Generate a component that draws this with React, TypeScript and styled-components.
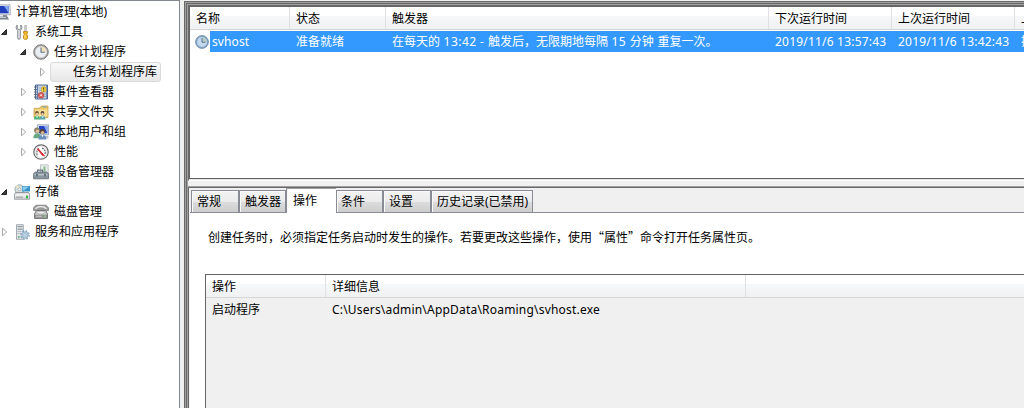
import React from "react";
import styled, { createGlobalStyle, css } from "styled-components";

const Global = createGlobalStyle`
  * { box-sizing: border-box; }
  html, body { margin: 0; padding: 0; overflow: hidden; }
  body {
    background: #f0f0f0;
    color: #000;
    font: 12px/16px "Noto Sans", "Noto Sans CJK SC", sans-serif;
  }
`;

const Window = styled.div`
  display: flex;
  width: 1024px;
  height: 408px;
  overflow: hidden;
  white-space: nowrap;
`;

const TreePanel = styled.nav`
  width: 180px;
  flex: none;
  background: #fff;
  border-top: 1px solid #828790;
  border-right: 1px solid #828790;
  padding-top: 1px;
`;

const TreeRow = styled.div<{ $level: number }>`
  display: flex;
  align-items: center;
  height: 20px;
  padding-left: ${(p) => [0, 0, 19, 38][p.$level]}px;
`;

const ArrowSlot = styled.span`
  display: flex;
  width: 14px;
  flex: none;
`;

const IconSlot = styled.span<{ $clipped?: boolean }>`
  display: flex;
  flex: none;
  justify-content: flex-end;
  overflow: hidden;
  width: ${(p) => (p.$clipped ? 11 : 16)}px;
`;

const TreeLabel = styled.span<{ $gap: number }>`
  padding-left: ${(p) => p.$gap}px;
`;

const SelectedLabel = styled.span`
  width: 111px;
  height: 20px;
  margin-left: -2px;
  padding: 1px 0 0 22px;
  border: 1px solid #d9d9d9;
  border-radius: 3px;
  background: linear-gradient(#f9f9f9, #e7e7e7);
`;

const Main = styled.main`
  flex: 1;
  min-width: 0;
  margin: 1px 0 0 4px;
  border: solid #696969;
  border-width: 1px 0 0 1px;
`;

const FrameOuter = styled.div`
  height: 100%;
  border: solid #a0a0a0;
  border-width: 1px 0 0 1px;
`;

const FrameMiddle = styled.div`
  height: 100%;
  border: solid #696969;
  border-width: 1px 0 0 1px;
`;

const FrameInner = styled.div`
  display: flex;
  flex-direction: column;
  height: 100%;
  border: solid #a0a0a0;
  border-width: 1px 0 0 1px;
`;

const TaskPane = styled.section`
  height: 176px;
  flex: none;
  background: #e3e3e3;
  border: solid #696969;
  border-width: 1px 0 1px 1px;
  border-bottom-color: #fff;
`;

const TaskList = styled.div`
  height: 173px;
  background: #fff;
  border: solid #646464;
  border-width: 1px 0 1px 1px;
`;

const HeaderRow = styled.div`
  display: flex;
  height: 23px;
  border-bottom: 1px solid #d5d5d5;
  background: linear-gradient(#fff 0 9px, #f7f8fa 9px, #f0f1f3 22px);
`;

const Column = styled.div<{ $w: number }>`
  width: ${(p) => p.$w}px;
  flex: none;
  padding: 4px 0 0 6px;
  border-right: 1px solid #e0e1e3;
`;

const TaskRow = styled.div`
  display: flex;
  height: 21px;
  margin-top: 1px;
`;

const RowIcon = styled.span`
  display: flex;
  align-items: center;
  width: 20px;
  padding-left: 5px;
  flex: none;
`;

const RowBand = styled.div`
  display: flex;
  flex: 1;
  background: #39f;
  color: #fff;
`;

const RowCell = styled.div<{ $w: number; $pad: number; $ls?: number }>`
  width: ${(p) => p.$w}px;
  flex: none;
  padding: 3px 0 0 ${(p) => p.$pad}px;
  letter-spacing: ${(p) => p.$ls ?? 0}px;
`;

const Latin = styled.span<{ $ls: number }>`
  letter-spacing: ${(p) => p.$ls}px;
`;

const DetailPane = styled.section`
  flex: 1;
  display: flex;
  flex-direction: column;
  margin-top: 5px;
  border: solid #a0a0a0;
  border-width: 1px 0 0 0;
`;

const DetailFrame = styled.div`
  flex: 1;
  display: flex;
  flex-direction: column;
  border: solid #696969;
  border-width: 1px 0 0 1px;
  padding-left: 1px;
`;

const TabStrip = styled.div`
  display: flex;
  align-items: flex-end;
  height: 25px;
  flex: none;
  padding-left: 1px;
  border-bottom: 1px solid #898c95;
`;

const Tab = styled.div<{ $w: number; $pad: number; $active?: boolean }>`
  width: ${(p) => p.$w}px;
  height: 22px;
  padding: 3px 0 0 ${(p) => p.$pad}px;
  border: 1px solid #898c95;
  border-bottom: 0;
  background: linear-gradient(#f3f3f3, #ebebeb 50%, #dddddd 50%, #cdcdcd);
  box-shadow: inset 1px 1px 0 #fafafa;
  ${(p) =>
    p.$active &&
    css`
      height: 25px;
      margin-bottom: -1px;
      padding-top: 4px;
      background: #fff;
      border-top-color: #a0a0a0;
      border-right: 0;
    `}
`;

const TabPage = styled.div`
  flex: 1;
  display: flex;
  flex-direction: column;
  background: #fff;
  padding: 16px 0 0 15px;
`;

const Description = styled.p`
  margin: 0 0 29px;
  padding-left: 3px;
  font-family: "Noto Sans CJK SC", sans-serif;
`;

const ActionList = styled.div`
  flex: 1;
  background: #f0f0f0;
  border: solid #646464;
  border-width: 1px 0 0 1px;
`;

const ActionRow = styled.div`
  display: flex;
  padding-top: 4px;
`;

const ActionCell = styled.div<{ $w: number; $ls?: number }>`
  width: ${(p) => p.$w}px;
  padding-left: 6px;
  letter-spacing: ${(p) => p.$ls ?? 0}px;
`;

const Arrow = ({ open }: { open: boolean }) => (
  <svg width="8" height="10" viewBox="0 0 8 10">
    {open ? (
      <path d="M6.500 2.500v5h-5z" fill="#404040" stroke="#262626" />
    ) : (
      <path d="M2.500 1.200v7.600l4.200-3.800z" fill="#fff" stroke="#a6a6a6" />
    )}
  </svg>
);

const Svg = ({ children, size = 16 }: { children: React.ReactNode; size?: number }) => (
  <svg width={size} height={size} viewBox="0 0 16 16" style={{ flex: "none" }}>
    {children}
  </svg>
);

const ComputerIcon = () => (
  <Svg>
    <path d="M1 .8h14l.4 10H1z" fill="#e2e5ec" stroke="#9aa3b6" strokeWidth=".8" />
    <path d="M3 2h10.800v7.300H3z" fill="#1f3fbb" />
    <path d="M9 2h4.800v7.300z" fill="#7fa5f0" />
    <path d="M8 11h4v2H8z" fill="#8b8f96" />
    <path d="M3 12.500h9.500l1.500 3H3z" fill="#77828b" />
    <path d="M4 13.500h7" stroke="#c8d0d6" />
  </Svg>
);

const ToolsIcon = () => (
  <Svg>
    <path d="M3.200 1v3.500L5 5.700l1.800-1.200V1c1.400 1 1.600 4-.5 5.500V14c0 1.800-2.600 1.800-2.600 0V6.500C1.600 5 1.800 2 3.200 1z" fill="#e3e5e6" stroke="#7d8286" strokeWidth=".9" />
    <path d="M10.700 1.500h1.600v6h-1.600z" fill="#d7d9db" stroke="#888" strokeWidth=".5" />
    <path d="M9.500 7.500h4v1.800l-1 .9 1 .9v3.400c0 1.200-4 1.200-4 0v-3.400l1-.9-1-.9z" fill="#f0b423" stroke="#b47a14" strokeWidth=".7" />
    <path d="M11 11v3.500" stroke="#ffe895" />
  </Svg>
);

const ClockIcon = ({ size, blue }: { size?: number; blue?: boolean }) => (
  <Svg size={size}>
    <circle cx="8" cy="8" r="7.300" fill={blue ? "#86a5c4" : "#a4a4a4"} stroke={blue ? "#5d7fa3" : "#777"} strokeWidth=".9" />
    <circle cx="8" cy="8" r="5.600" fill={blue ? "#c3daee" : "#e9eff5"} stroke={blue ? "#a9c3db" : "#ddd"} strokeWidth=".6" />
    <path d="M8 8V2.600A5.400 5.400 0 0 1 13.400 8z" fill={blue ? "#b5cdc6" : "#f4dfb8"} />
    <path d="M8 3.500v4.800h3.800" fill="none" stroke={blue ? "#54738f" : "#617589"} strokeWidth="1.100" />
  </Svg>
);

const EventIcon = () => (
  <Svg>
    <path d="M2.500 1h12v14h-12z" fill="#5d7fb0" stroke="#3f5c8c" strokeWidth=".9" />
    <path d="M5 1.500h8.300v13H5z" fill="#c9d5e6" />
    <path d="M3.500 1.500v13" stroke="#d7dde7" />
    <path d="M1 3h3M1 5.500h3M1 8h3M1 10.500h3M1 13h3" stroke="#5b6577" />
    <path d="M6 4h3M6 6.500h2M11 10h2M11 12.500h2" stroke="#8196b4" strokeWidth=".7" />
    <path d="M10.700 1.800c2.500 1.500 2.800 3.700 1.800 6.200H9C8 5.500 8.300 3.300 10.700 1.800z" fill="#f7d443" stroke="#c49b1c" strokeWidth=".6" />
    <path d="M10.700 3.500v2.300m0 .8v1" stroke="#4f4310" />
    <circle cx="8" cy="11.300" r="2.900" fill="#d75a58" stroke="#b13a38" strokeWidth=".6" />
    <path d="M7 10.300l2 2m0-2l-2 2" stroke="#fff" strokeWidth=".9" />
  </Svg>
);

const FolderIcon = () => (
  <Svg>
    <path d="M1 4.500l6-.5 1.500-2H15v11.500H1z" fill="#ecc86c" stroke="#c69f49" strokeWidth=".8" />
    <path d="M2 5.500h12.300v7.300H2z" fill="#f7dd93" />
    <path d="M9.500 3h4" stroke="#6a9dbd" />
    <circle cx="4" cy="9" r="1.900" fill="#6e5233" />
    <circle cx="9.500" cy="9" r="1.900" fill="#54433a" />
    <path d="M1 15.500c0-5.300 6-5.300 6 0z" fill="#4bb37a" />
    <path d="M6.500 15.500c0-5.300 6-5.300 6 0z" fill="#5aa7a9" />
    <circle cx="4.200" cy="9.900" r="1.200" fill="#f0cda3" />
    <circle cx="9.500" cy="9.900" r="1.200" fill="#f0cda3" />
    <path d="M3.500 12l.7 1.500.7-1.500m4 0l.7 1.500.7-1.500" stroke="#fff" fill="none" strokeWidth=".7" />
  </Svg>
);

const UsersIcon = () => (
  <Svg>
    <path d="M4.500.8h11v10h-11z" fill="#dfe5ef" stroke="#8c98ae" strokeWidth=".8" />
    <path d="M6 2h8.300v7.300H6z" fill="#2445c4" />
    <path d="M11 2h3.300v7.300z" fill="#8aaaf0" />
    <path d="M10 12h5.500v2.500H10z" fill="#bac2cb" />
    <circle cx="4" cy="6.300" r="2.900" fill="#8d8069" />
    <circle cx="4.500" cy="7.300" r="1.800" fill="#dcc09c" />
    <path d="M.3 14.200c0-6.500 7.700-6.500 7.700 0z" fill="#69a884" />
    <circle cx="9.300" cy="7.500" r="2.600" fill="#584236" />
    <circle cx="9.500" cy="8.600" r="1.700" fill="#d9b48e" />
    <path d="M5.500 15.500c0-6.500 8-6.500 8 0z" fill="#6991bd" />
    <path d="M8.500 11l1 2.200 1-2.200z" fill="#fff" />
  </Svg>
);

const PerfIcon = () => (
  <Svg>
    <circle cx="8" cy="8" r="7.200" fill="#fff" stroke="#6b6b6b" strokeWidth="1.300" />
    <circle cx="8" cy="8" r="5.900" fill="#fff" stroke="#cfcfcf" strokeWidth=".6" />
    <path d="M4.300 11.300C3.200 8.700 4 5.600 6 4.500M9 4.300c2.700.3 4 3 2.800 6" fill="none" stroke="#6c6c6c" strokeWidth="1.200" strokeDasharray="2 .7" />
    <path d="M5 4.500l6.500 7.300-2-.3L4.600 5.300z" fill="#d3262b" stroke="#d3262b" strokeWidth=".9" />
  </Svg>
);

const DeviceIcon = () => (
  <Svg>
    <path d="M7.500.8h7.700v9H7.500z" fill="#e8ebec" stroke="#b3b9bc" strokeWidth=".8" />
    <path d="M10.500 2.500h2v5h-2z" fill="#86ba87" />
    <path d="M4.500 8V6.200h5V8" fill="none" stroke="#66737e" strokeWidth="1.200" />
    <path d="M.6 9.500L2.500 8h11l2 1.500v5.300H.6z" fill="#89969f" stroke="#5d6a75" strokeWidth=".8" />
    <path d="M1.500 10.800h13" stroke="#d2dadf" />
    <path d="M4 10v2.300M12 10v2.300" stroke="#4b565f" strokeWidth="1.400" />
  </Svg>
);

const StorageIcon = () => (
  <Svg>
    <circle cx="5.500" cy="5.300" r="4.500" fill="#d5dfe0" stroke="#8d999d" strokeWidth=".8" />
    <path d="M5.500 5.300L2 2.500l2-1.400z" fill="#f4e9b8" />
    <circle cx="5.500" cy="5.300" r="1.400" fill="#fff" stroke="#8b989d" strokeWidth=".6" />
    <path d="M8 2h8v5.500H8z" fill="#3a93c6" />
    <path d="M8.500 2.500H15L10 6.500H8.500z" fill="#8acdea" />
    <path d="M1.500 8.500h13.300l.8 2.300v4.400H.4v-4.400z" fill="#dcdedf" stroke="#83888b" strokeWidth=".8" />
    <path d="M1 11h14" stroke="#fff" />
    <path d="M12 11.500h2v2.800h-2z" fill="#37b43f" />
    <path d="M2 13.200h7" stroke="#979c9f" />
  </Svg>
);

const DiskIcon = () => (
  <Svg>
    <path d="M3 1.200h10l2.500 2.600v2.700H.5V3.800z" fill="#9b9b9b" stroke="#7f7f7f" strokeWidth=".8" />
    <path d="M2.500 4.800c2.500-2.800 8.500-2.800 11 0" fill="none" stroke="#ececec" strokeWidth="1.300" />
    <path d="M3.500 6.500h9.200l1.800 3.500v4.500h-13V10z" fill="#c9c9c9" stroke="#6b6b6b" strokeWidth=".9" />
    <ellipse cx="8" cy="8.600" rx="3.800" ry="1.300" fill="#f3f3f3" stroke="#999" strokeWidth=".5" />
    <path d="M2 10.800h12v2.900H2z" fill="#8c8c8c" />
    <path d="M3 12.200h6" stroke="#d4d4d4" />
    <path d="M11 12.200h1.800" stroke="#8be586" strokeWidth="1.300" />
  </Svg>
);

const ServiceIcon = () => (
  <Svg>
    <path d="M2.500.7h6.800v14.600H2.500z" fill="#e4e7e9" stroke="#99a2a8" strokeWidth=".9" />
    <path d="M3.500 2.700h5M3.500 5.200h5" stroke="#7c8a93" />
    <path d="M3.500 7.500h4M3.500 9.500h3" stroke="#b5bec4" />
    <path d="M4 13h1.800" stroke="#56ae6e" strokeWidth="1.500" />
    <circle cx="11" cy="11" r="4.100" fill="none" stroke="#7da2bf" strokeWidth="1.500" strokeDasharray="1.700 1.520" />
    <circle cx="11" cy="11" r="3.200" fill="#bdd4e6" stroke="#86a9c3" strokeWidth=".8" />
    <circle cx="11" cy="11" r="1.200" fill="#fff" stroke="#7499b6" strokeWidth=".6" />
  </Svg>
);

type Node = { level: number; label: string; open?: boolean; icon: React.ReactNode };

const nodes: Node[] = [
  { level: 1, label: "系统工具", open: true, icon: <ToolsIcon /> },
  { level: 2, label: "任务计划程序", open: true, icon: <ClockIcon /> },
  { level: 3, label: "任务计划程序库", open: false, icon: null },
  { level: 2, label: "事件查看器", open: false, icon: <EventIcon /> },
  { level: 2, label: "共享文件夹", open: false, icon: <FolderIcon /> },
  { level: 2, label: "本地用户和组", open: false, icon: <UsersIcon /> },
  { level: 2, label: "性能", open: false, icon: <PerfIcon /> },
  { level: 2, label: "设备管理器", icon: <DeviceIcon /> },
  { level: 1, label: "存储", open: true, icon: <StorageIcon /> },
  { level: 2, label: "磁盘管理", icon: <DiskIcon /> },
  { level: 1, label: "服务和应用程序", open: false, icon: <ServiceIcon /> },
];

const taskColumns: [string, number][] = [
  ["名称", 100],
  ["状态", 96],
  ["触发器", 383],
  ["下次运行时间", 123],
  ["上次运行时间", 123],
  ["上次运行结果", 120],
];

const tabs: [string, number, number][] = [
  ["常规", 48, 5],
  ["触发器", 47, 5],
  ["操作", 50, 6],
  ["条件", 47, 4],
  ["设置", 48, 5],
  ["历史记录(已禁用)", 102, 5],
];

export default function App() {
  return (
    <Window lang="zh-CN">
      <Global />
      <TreePanel>
        <TreeRow $level={0}>
          <IconSlot $clipped>
            <ComputerIcon />
          </IconSlot>
          <TreeLabel $gap={5}>
            计算机管理<Latin $ls={-0.1}>(</Latin>本地<Latin $ls={0}>)</Latin>
          </TreeLabel>
        </TreeRow>
        {nodes.map((n) => (
          <TreeRow key={n.label} $level={n.level}>
            <ArrowSlot>{n.open !== undefined && <Arrow open={n.open} />}</ArrowSlot>
            {n.icon ? (
              <>
                <IconSlot>{n.icon}</IconSlot>
                <TreeLabel $gap={5}>{n.label}</TreeLabel>
              </>
            ) : (
              <SelectedLabel>{n.label}</SelectedLabel>
            )}
          </TreeRow>
        ))}
      </TreePanel>
      <Main>
        <FrameOuter>
          <FrameMiddle>
            <FrameInner>
              <TaskPane>
                <TaskList>
                  <HeaderRow>
                    {taskColumns.map(([label, w]) => (
                      <Column key={label} $w={w}>
                        {label}
                      </Column>
                    ))}
                  </HeaderRow>
                  <TaskRow>
                    <RowIcon>
                      <ClockIcon size={14} blue />
                    </RowIcon>
                    <RowBand>
                      <RowCell $w={80} $pad={2} $ls={0.1}>svhost</RowCell>
                      <RowCell $w={96} $pad={6}>准备就绪</RowCell>
                      <RowCell $w={383} $pad={6}>
                        在每天的<Latin $ls={0.45}> 13:42 - </Latin>触发后，无限期地每隔
                        <Latin $ls={0.45}> 15 </Latin>分钟<Latin $ls={0.6}> </Latin>重复一次。
                      </RowCell>
                      <RowCell $w={123} $pad={6} $ls={0.2}>2019/11/6 13:57:43</RowCell>
                      <RowCell $w={123} $pad={6} $ls={0.2}>2019/11/6 13:42:43</RowCell>
                      <RowCell $w={60} $pad={6}>操作成功</RowCell>
                    </RowBand>
                  </TaskRow>
                </TaskList>
              </TaskPane>
              <DetailPane>
                <DetailFrame>
                  <TabStrip>
                    {tabs.map(([label, w, pad]) => (
                      <Tab key={label} $w={w} $pad={pad} $active={label === "操作"}>
                        {label}
                      </Tab>
                    ))}
                  </TabStrip>
                  <TabPage>
                    <Description>
                      创建任务时，必须指定任务启动时发生的操作。若要更改这些操作，使用“属性”命令打开任务属性页。
                    </Description>
                    <ActionList>
                      <HeaderRow>
                        <Column $w={120}>操作</Column>
                        <Column $w={420}>详细信息</Column>
                      </HeaderRow>
                      <ActionRow>
                        <ActionCell $w={120}>启动程序</ActionCell>
                        <ActionCell $w={420} $ls={0.2}>
                          C:\Users\admin\AppData\Roaming\svhost.exe
                        </ActionCell>
                      </ActionRow>
                    </ActionList>
                  </TabPage>
                </DetailFrame>
              </DetailPane>
            </FrameInner>
          </FrameMiddle>
        </FrameOuter>
      </Main>
    </Window>
  );
}
